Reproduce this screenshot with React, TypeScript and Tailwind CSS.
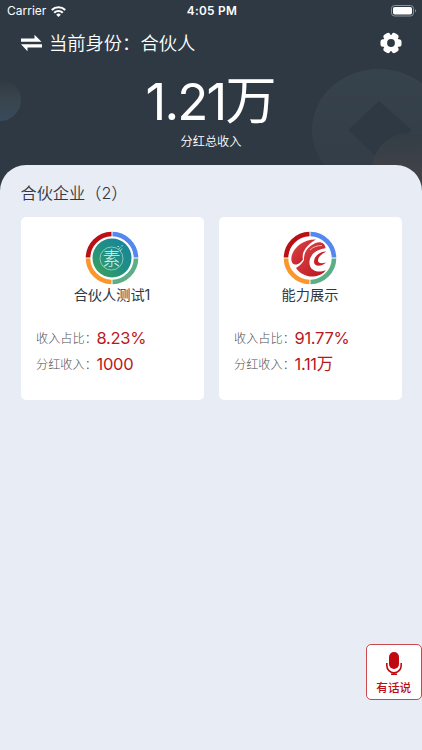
import React from 'react';

type Company = {
  name: string;
  ratio: string;
  income: string;
  logo: React.ReactNode;
};

const GreenLogo = () => (
  <>
    <defs>
      <linearGradient id="green" x1="1" y1="0" x2="0" y2="1">
        <stop offset="0" stopColor="#1683a0" />
        <stop offset="0.5" stopColor="#208f83" />
        <stop offset="1" stopColor="#3fa357" />
      </linearGradient>
    </defs>
    <circle cx="27" cy="27" r="19.5" fill="url(#green)" />
    <circle cx="26.500" cy="27.500" r="11.500" fill="none" stroke="#a5d6cc" strokeWidth="0.8" />
    <text x="26.500" y="33.500" textAnchor="middle" fontSize="18" fontWeight="300" fill="#d9f2ea">素</text>
    <path d="M33.500 18l2-1.500M35 20l2-2.500M32.500 15.500h1.500M37 15.500v-1.500" stroke="#c4e8dd" strokeWidth="0.9" fill="none" />
  </>
);

const RedLogo = () => (
  <>
    <defs>
      <linearGradient id="red" x1="0" y1="0" x2="1" y2="1">
        <stop offset="0" stopColor="#e2484a" />
        <stop offset="1" stopColor="#b5141c" />
      </linearGradient>
    </defs>
    <path d="M33 8.500C22 8 11.500 15 8.800 24.500C7.500 30 9 34 13.500 33.500C16.500 33 18 31 20 28.500C18.500 23 21.500 15 33 8.500Z" fill="url(#red)" />
    <path d="M42.500 17C42 12 37.500 10 32.500 12C24.500 15.500 20.500 22 21 29C19.500 32 17.500 34 13 37C17 43 24 46 31 45.500C36 45 40 43 43 39C36.500 42 29 40.500 27 35C25 29 28.500 21.500 36 19C38.500 18 41 17.500 42.500 17Z" fill="url(#red)" />
    <path d="M27 19C30 16 34 14.500 39 14.500" fill="none" stroke="#f6d5d5" strokeWidth="0.8" />
    <path d="M43.500 20.500C36 20.500 31 25.500 31 31C31.500 36 38 36 43 31.500C38.500 32.800 35 32.500 35 29.500C35 26 39 22.500 43.500 20.500Z" fill="#c92028" />
  </>
);

const LogoRing = ({ children }: { children: React.ReactNode }) => (
  <svg className="block h-[54px] w-[54px]" viewBox="0 0 54 54">
    <g fill="none" strokeWidth="4.600">
      <path d="M3 26.500A24 24 0 0 1 26.500 3" stroke="#b90f15" />
      <path d="M27.500 3A24 24 0 0 1 51 26.500" stroke="#5587ee" />
      <path d="M51 27.500A24 24 0 0 1 27.500 51" stroke="#5cae86" />
      <path d="M26.500 51A24 24 0 0 1 3 27.500" stroke="#fb962c" />
    </g>
    {children}
  </svg>
);

const companies: Company[] = [
  { name: '合伙人测试1', ratio: '8.23%', income: '1000', logo: <GreenLogo /> },
  { name: '能力展示', ratio: '91.77%', income: '1.11万', logo: <RedLogo /> },
];

const StatusBar = () => (
  <div className="grid h-[22px] grid-cols-3 items-center pl-[7px] pr-[5px] text-[12px] leading-none">
    <div className="flex items-center gap-[5px]">
      <span>Carrier</span>
      <svg className="h-[11px] w-[15px]" viewBox="0 0 15 11" fill="none" stroke="white" strokeWidth="2.100">
        <path d="M.8 4A9.600 9.600 0 0 1 14.200 4" />
        <path d="M3.200 6.700A6.200 6.200 0 0 1 11.800 6.700" />
        <path d="M7.500 11L5.200 8.700A3.300 3.300 0 0 1 9.800 8.700Z" fill="white" stroke="none" />
      </svg>
    </div>
    <span className="pt-px text-center text-[11.800px] font-semibold tracking-[0.3px]">4:05 PM</span>
    <svg className="h-[12px] w-[26px] justify-self-end" viewBox="0 0 26 12">
      <rect x="0.500" y="0.500" width="22" height="10.500" rx="3" fill="none" stroke="#8b9197" />
      <rect x="2" y="2" width="19" height="7.500" rx="1.700" fill="white" />
      <path d="M24 4v3.500c1.300-.5 1.300-3 0-3.500Z" fill="#8b9197" />
    </svg>
  </div>
);

const GEAR_ANGLES = [0, 60, 120, 180, 240, 300];

const GearIcon = () => (
  <svg className="h-[22px] w-[22px]" viewBox="-11 -11 22 22" fill="white">
    <circle r="8" />
    {GEAR_ANGLES.map((angle) => (
      <rect key={angle} x="3" y="-3.700" width="7.500" height="7.400" rx="2.500" transform={`rotate(${angle})`} />
    ))}
    <circle r="3.900" fill="#2f3943" />
  </svg>
);

const HeaderArt = () => (
  <svg className="absolute inset-0 h-[200px] w-full" viewBox="0 0 422 200">
    <defs>
      <linearGradient id="bubble" x1="0" y1="0" x2="0" y2="1">
        <stop offset="0" stopColor="#2f3943" />
        <stop offset="0.5" stopColor="#39454c" />
        <stop offset="1" stopColor="#384a5d" />
      </linearGradient>
      <linearGradient id="coin" x1="0" y1="0" x2="0" y2="1">
        <stop offset="0" stopColor="#36424c" />
        <stop offset="1" stopColor="#323c46" />
      </linearGradient>
      <linearGradient id="warm" x1="0" y1="0" x2="0" y2="1">
        <stop offset="0" stopColor="#333d46" />
        <stop offset="0.5" stopColor="#404248" />
      </linearGradient>
    </defs>
    <circle cx="0" cy="100" r="21" fill="url(#bubble)" />
    <path fillRule="evenodd" d="M312 130a67 61 0 1 1 134 0a67 61 0 1 1 -134 0ZM379 101L348 130L379 160L412 130Z" fill="url(#coin)" />
    <circle cx="409" cy="170" r="37" fill="url(#warm)" />
  </svg>
);

const CompanyCard = ({ company }: { company: Company }) => (
  <div className="flex h-[183px] flex-col items-center rounded-[5px] bg-white pt-[14px]">
    <LogoRing>{company.logo}</LogoRing>
    <div className="h-[20px] text-[14.200px] leading-[19px] text-[#303943]">{company.name}</div>
    <div className="mt-[20px] w-full pl-[15.500px]">
      <Row label="收入占比" value={company.ratio} />
      <Row label="分红收入" value={company.income} />
    </div>
  </div>
);

const Row = ({ label, value }: { label: string; value: string }) => (
  <div className="flex h-[26px] items-center">
    <span className="w-[60.500px] whitespace-nowrap pt-[2px] text-[12.200px] font-light leading-[24px] text-[#505050]">{label}：</span>
    <span className="text-[16.500px] leading-[26px] tracking-[-0.3px] text-[#b9181e]">{value}</span>
  </div>
);

export default function App() {
  return (
    <div lang="zh-CN" className="flex h-[750px] w-full flex-col overflow-hidden bg-[#2f3943] font-['Inter','Noto_Sans_CJK_SC',sans-serif]">
      <header className="relative h-[165px] shrink-0 text-white">
        <HeaderArt />
        <div className="relative">
          <StatusBar />
          <div className="flex h-[42px] items-center justify-between pl-[21px] pr-[20px]">
            <div className="flex items-center gap-[7px]">
              <svg className="h-[18px] w-[21px]" viewBox="0 0 21 18" fill="white">
                <path d="M0 4.500H13.500V.8L20.500 7.700H0ZM21 10.300H0L6.500 17.200V13.500H21Z" />
              </svg>
              <span className="text-[18.300px] font-[350] leading-[24px]">当前身份：合伙人</span>
            </div>
            <GearIcon />
          </div>
          <div className="flex h-[76px] items-center justify-center text-[51px] leading-[76px]">
            <span className="font-normal tracking-[-1.800px]">1.21</span>
            <span className="-mt-[3px] font-normal">万</span>
          </div>
          <div className="-mt-[8px] text-center text-[12.200px] font-[350] leading-[20px]">分红总收入</div>
        </div>
      </header>

      <main className="relative flex-1 rounded-t-[26px] bg-[#e8ecf4] px-[20.500px] pt-[16px]">
        <h1 className="h-[24px] text-[16.200px] font-[350] leading-[24px] text-[#303943]">合伙企业（2）</h1>
        <div className="mt-[12px] grid grid-cols-2 gap-[15px]">
          {companies.map((company) => (
            <CompanyCard key={company.name} company={company} />
          ))}
        </div>

        <button className="absolute right-0 top-[479px] flex h-[56px] w-[56.500px] flex-col items-center rounded-[5px] border border-[#c9494f] bg-white pt-[6px] text-[#b90f15]">
          <svg className="h-[25px] w-[18px]" viewBox="0 0 18 25">
            <rect x="4" y="1" width="10" height="17" rx="5" fill="#c00a10" />
            <path d="M1.800 12v2.500a7.200 7.200 0 0 0 14.400 0V12M9 21v2.500M6 23.300h6" fill="none" stroke="#c00a10" strokeWidth="1.600" />
          </svg>
          <span className="mt-[3px] text-[11.700px] font-medium leading-[18px]">有话说</span>
        </button>
      </main>
    </div>
  );
}
